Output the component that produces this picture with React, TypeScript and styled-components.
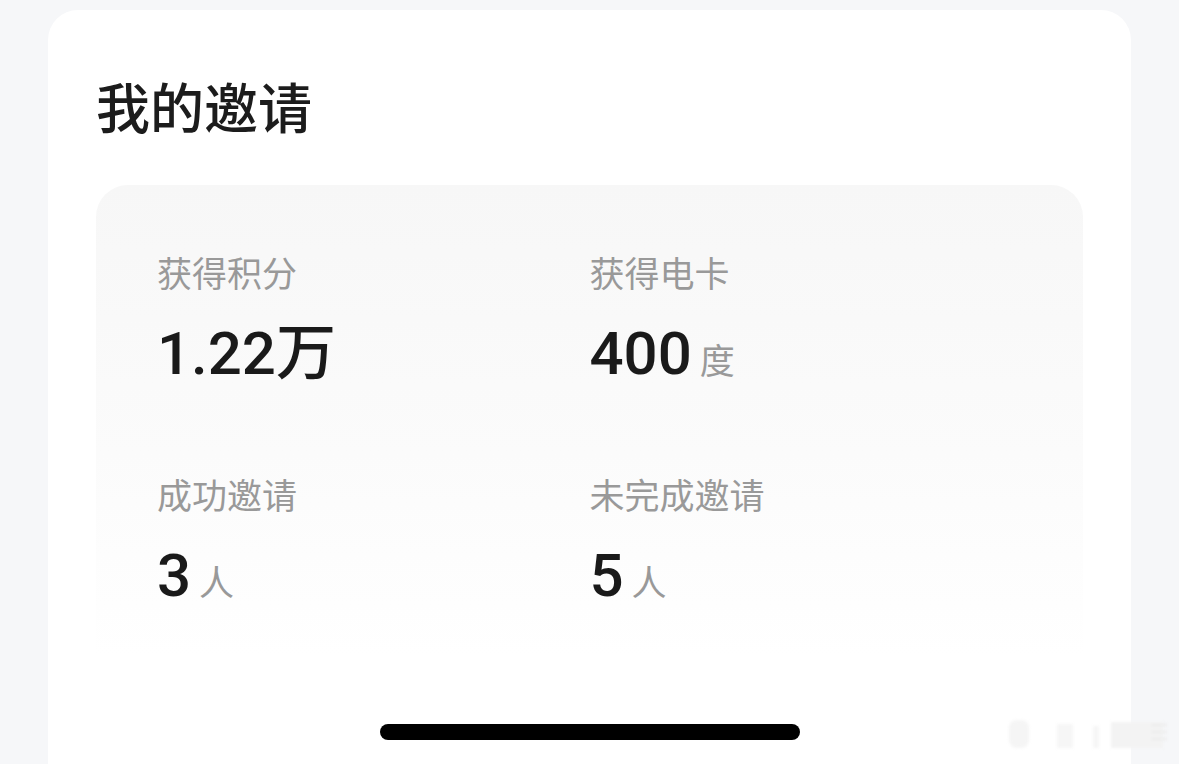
import styled, { createGlobalStyle } from "styled-components";

const GlobalStyle = createGlobalStyle`
  html, body {
    margin: 0;
    padding: 0;
    background: #f6f7f9;
    height: 100%;
    overflow: hidden;
  }
  body {
    font-family: "Noto Sans", "Noto Sans CJK SC", sans-serif;
    -webkit-font-smoothing: antialiased;
  }
`;

interface Stat {
  label: string;
  value: string;
  unit?: string;
}

const stats: Stat[] = [
  { label: "获得积分", value: "1.22万" },
  { label: "获得电卡", value: "400", unit: "度" },
  { label: "成功邀请", value: "3", unit: "人" },
  { label: "未完成邀请", value: "5", unit: "人" },
];

function App() {
  return (
    <>
      <GlobalStyle />
      <Page>
        <Card>
          <Title>我的邀请</Title>
          <Panel>
            {stats.map((stat) => (
              <StatItem key={stat.label}>
                <Label>{stat.label}</Label>
                <ValueRow>
                  <Value>{stat.value}</Value>
                  {stat.unit && <Unit>{stat.unit}</Unit>}
                </ValueRow>
              </StatItem>
            ))}
          </Panel>
        </Card>
      </Page>
      <HomeIndicator />
      <Watermark viewBox="0 0 170 36" aria-hidden>
        <rect x="4" y="4" width="20" height="28" rx="8" fill="#f5f5f5" />
        <rect x="52" y="8" width="16" height="24" fill="#f6f6f6" />
        <rect x="88" y="10" width="6" height="22" fill="#f6f6f6" />
        <rect x="106" y="6" width="52" height="26" fill="#f3f3f3" />
        <rect x="146" y="8" width="16" height="2" fill="#ebebeb" />
        <rect x="146" y="15" width="16" height="2" fill="#ebebeb" />
        <rect x="146" y="22" width="16" height="2" fill="#ebebeb" />
      </Watermark>
    </>
  );
}

const Page = styled.div`
  padding: 10px 48px 0;
`;

const Card = styled.div`
  background: #ffffff;
  border-radius: 30px 30px 0 0;
  padding: 63px 48px 80px;
  min-height: 800px;
  box-sizing: border-box;
`;

const Title = styled.h1`
  margin: 0 0 46px 0;
  font-family: "Noto Sans CJK SC", sans-serif;
  font-size: 54px;
  line-height: 66px;
  font-weight: 500;
  color: #1c1c1c;
`;

const Panel = styled.div`
  display: grid;
  grid-template-columns: 1fr 1fr;
  row-gap: 80px;
  padding: 62px 61px 110px;
  border-radius: 32px;
  background: linear-gradient(180deg, #f7f7f7 0%, #fbfbfb 50%, #ffffff 88%);
`;

const StatItem = styled.div`
  display: flex;
  flex-direction: column;
  gap: 22px;
`;

const Label = styled.div`
  font-family: "Noto Sans CJK SC", sans-serif;
  font-size: 35px;
  line-height: 50px;
  color: #999999;
`;

const ValueRow = styled.div`
  display: flex;
  align-items: baseline;
  gap: 8px;
  height: 70px;
`;

const Value = styled.span`
  font-family: Roboto, "Noto Sans CJK SC", sans-serif;
  font-size: 60px;
  line-height: 70px;
  font-weight: 500;
  color: #1a1a1a;
`;

const Unit = styled.span`
  font-family: "Noto Sans CJK SC", sans-serif;
  font-size: 35px;
  line-height: 50px;
  color: #999999;
`;

const HomeIndicator = styled.div`
  position: fixed;
  left: 380px;
  top: 724px;
  width: 420px;
  height: 16px;
  border-radius: 8px;
  background: #000000;
`;

const Watermark = styled.svg`
  position: fixed;
  left: 1005px;
  top: 716px;
  width: 170px;
  height: 36px;
  filter: blur(1.5px);
`;

export default App;
